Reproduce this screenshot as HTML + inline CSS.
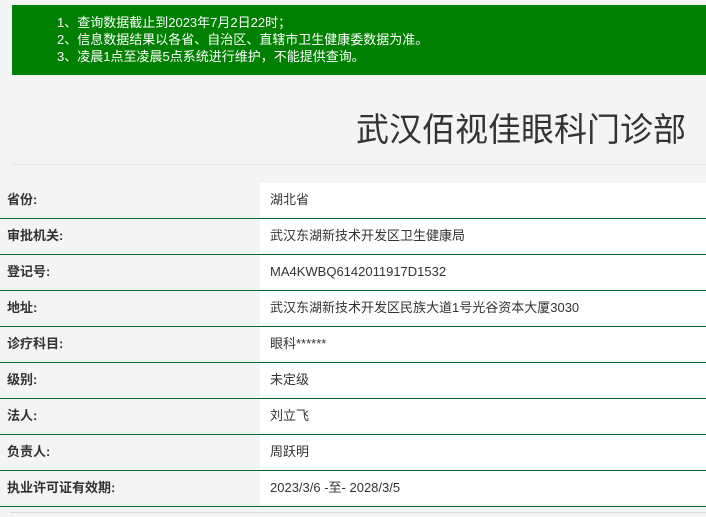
<!DOCTYPE html>
<html><head><meta charset="utf-8"><style>
*{margin:0;padding:0;box-sizing:border-box}
body{width:706px;height:517px;background:#f4f4f4;font-family:"Liberation Sans","Noto Sans CJK SC",sans-serif;color:#333;overflow:hidden;position:relative}
.notice{position:absolute;left:12px;top:5px;width:694px;height:70px;background:#008000;color:#fff;font-size:13px;line-height:17px;padding:9px 0 0 45px}
h1{position:absolute;right:20px;top:107px;font-size:33px;font-weight:normal;color:#333;line-height:46px}
.hr{position:absolute;left:12px;right:0;top:164px;height:1px;background:#e6e6e6}
.row{position:absolute;left:0;width:706px;height:36px;border-bottom:1.5px solid #0b6b2e;font-size:13px}
.l{position:absolute;left:0;top:0;width:260px;height:34px;line-height:34px;padding-left:7px;font-weight:bold;color:#333}
.v{position:absolute;left:260px;top:0;right:0;height:34px;line-height:34px;padding-left:10px;background:#fff;color:#333}
.foot{position:absolute;left:10px;right:0;top:512px;height:1px;background:#ddd}
</style></head><body>
<div class="notice">1、查询数据截止到2023年7月2日22时；<br>2、信息数据结果以各省、自治区、直辖市卫生健康委数据为准。<br>3、凌晨1点至凌晨5点系统进行维护，不能提供查询。</div>
<h1>武汉佰视佳眼科门诊部</h1>
<div class="hr"></div>
<div class="row" style="top:183px"><div class="l">省份:</div><div class="v">湖北省</div></div>
<div class="row" style="top:219px"><div class="l">审批机关:</div><div class="v">武汉东湖新技术开发区卫生健康局</div></div>
<div class="row" style="top:255px"><div class="l">登记号:</div><div class="v">MA4KWBQ6142011917D1532</div></div>
<div class="row" style="top:291px"><div class="l">地址:</div><div class="v">武汉东湖新技术开发区民族大道1号光谷资本大厦3030</div></div>
<div class="row" style="top:327px"><div class="l">诊疗科目:</div><div class="v">眼科******</div></div>
<div class="row" style="top:363px"><div class="l">级别:</div><div class="v">未定级</div></div>
<div class="row" style="top:399px"><div class="l">法人:</div><div class="v">刘立飞</div></div>
<div class="row" style="top:435px"><div class="l">负责人:</div><div class="v">周跃明</div></div>
<div class="row" style="top:471px"><div class="l">执业许可证有效期:</div><div class="v">2023/3/6 -至- 2028/3/5</div></div>
<div class="foot"></div>
</body></html>
